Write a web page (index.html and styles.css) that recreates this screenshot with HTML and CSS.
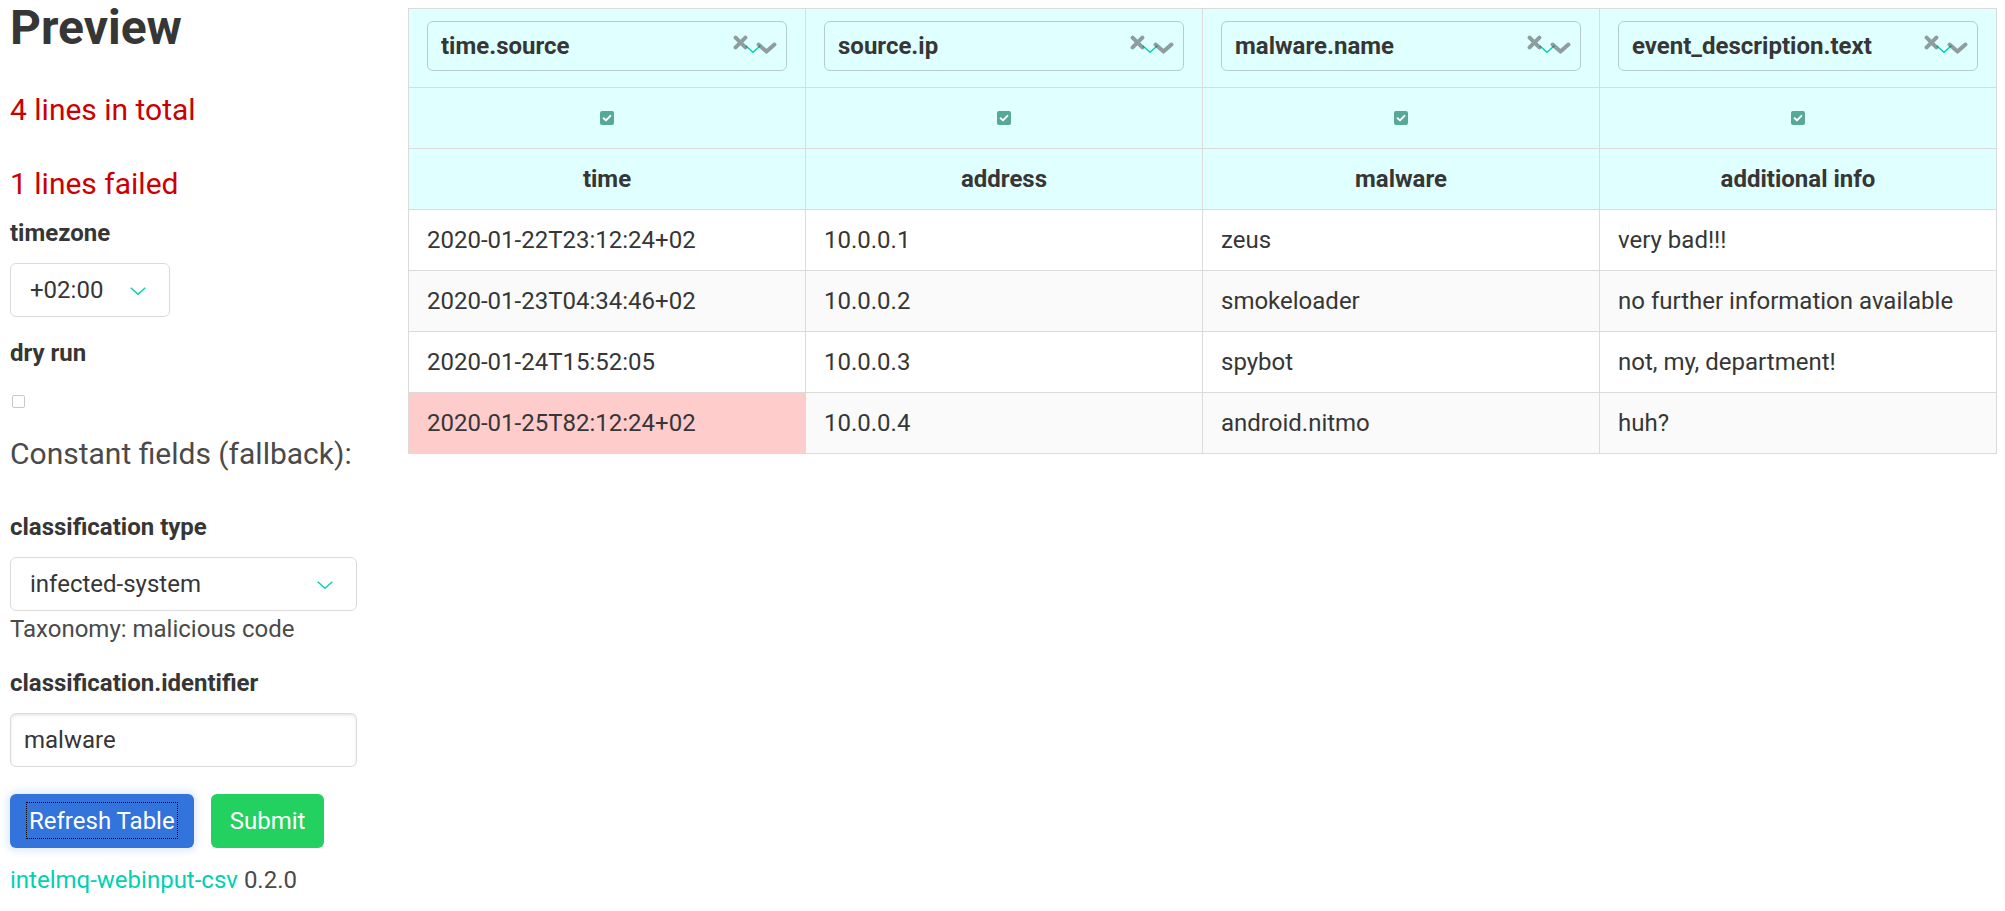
FILE: index.html
```html
<!DOCTYPE html>
<html lang="en">
<head>
<meta charset="utf-8">
<title>Preview</title>
<link rel="stylesheet" href="styles.css">
</head>
<body>
<div class="page">
  <aside class="sidebar">
    <h1 class="title">Preview</h1>
    <p class="subtitle danger">4 lines in total</p>
    <p class="subtitle danger failed">1 lines failed</p>

    <div class="field">
      <label class="label">timezone</label>
      <div class="select select-tz">
        <select><option>+02:00</option></select>
        <svg class="arrow" width="16" height="8" viewBox="0 0 16 8"><path d="M0.7 0.7 L8 7.3 L15.3 0.7" fill="none" stroke="#00d1b2" stroke-width="1.4"/></svg>
      </div>
    </div>

    <div class="field">
      <label class="label">dry run</label>
      <div class="check-wrap"><span class="checkbox"></span></div>
    </div>

    <p class="subtitle muted">Constant fields (fallback):</p>

    <div class="field">
      <label class="label">classification type</label>
      <div class="select select-full">
        <select><option>infected-system</option></select>
        <svg class="arrow" width="16" height="8" viewBox="0 0 16 8"><path d="M0.7 0.7 L8 7.3 L15.3 0.7" fill="none" stroke="#00d1b2" stroke-width="1.4"/></svg>
      </div>
      <p class="help">Taxonomy: malicious code</p>
    </div>

    <div class="field">
      <label class="label">classification.identifier</label>
      <input class="input" type="text" value="malware">
    </div>

    <div class="buttons">
      <button class="button is-link is-focused"><span class="focus-ring">Refresh Table</span></button>
      <button class="button is-success">Submit</button>
    </div>

    <p class="footer"><a class="link" href="#">intelmq-webinput-csv</a> 0.2.0</p>
  </aside>

  <main class="main">
    <table class="preview">
      <thead>
        <tr class="row-select">
          <th>
            <div class="vs"><div class="vs-toggle">
              <span class="vs-value">time.source</span>
              <svg class="vs-teal" width="16" height="8" viewBox="0 0 16 8"><path d="M0.7 0.7 L8 7.3 L15.3 0.7" fill="none" stroke="#00d1b2" stroke-width="1.4"/></svg>
              <span class="vs-actions">
                <svg class="vs-clear" width="15" height="15" viewBox="0 0 15 15"><path d="M2.6 2.6 L12.4 12.4 M12.4 2.6 L2.6 12.4" stroke="rgba(60,60,60,0.5)" stroke-width="4" stroke-linecap="round"/></svg>
                <svg class="vs-open" width="21" height="12" viewBox="0 0 21 12"><path d="M2.6 2.6 L10.5 9.6 L18.4 2.6" fill="none" stroke="rgba(60,60,60,0.5)" stroke-width="4" stroke-linecap="round" stroke-linejoin="round"/></svg>
              </span>
            </div></div>
          </th>
          <th>
            <div class="vs"><div class="vs-toggle">
              <span class="vs-value">source.ip</span>
              <svg class="vs-teal" width="16" height="8" viewBox="0 0 16 8"><path d="M0.7 0.7 L8 7.3 L15.3 0.7" fill="none" stroke="#00d1b2" stroke-width="1.4"/></svg>
              <span class="vs-actions">
                <svg class="vs-clear" width="15" height="15" viewBox="0 0 15 15"><path d="M2.6 2.6 L12.4 12.4 M12.4 2.6 L2.6 12.4" stroke="rgba(60,60,60,0.5)" stroke-width="4" stroke-linecap="round"/></svg>
                <svg class="vs-open" width="21" height="12" viewBox="0 0 21 12"><path d="M2.6 2.6 L10.5 9.6 L18.4 2.6" fill="none" stroke="rgba(60,60,60,0.5)" stroke-width="4" stroke-linecap="round" stroke-linejoin="round"/></svg>
              </span>
            </div></div>
          </th>
          <th>
            <div class="vs"><div class="vs-toggle">
              <span class="vs-value">malware.name</span>
              <svg class="vs-teal" width="16" height="8" viewBox="0 0 16 8"><path d="M0.7 0.7 L8 7.3 L15.3 0.7" fill="none" stroke="#00d1b2" stroke-width="1.4"/></svg>
              <span class="vs-actions">
                <svg class="vs-clear" width="15" height="15" viewBox="0 0 15 15"><path d="M2.6 2.6 L12.4 12.4 M12.4 2.6 L2.6 12.4" stroke="rgba(60,60,60,0.5)" stroke-width="4" stroke-linecap="round"/></svg>
                <svg class="vs-open" width="21" height="12" viewBox="0 0 21 12"><path d="M2.6 2.6 L10.5 9.6 L18.4 2.6" fill="none" stroke="rgba(60,60,60,0.5)" stroke-width="4" stroke-linecap="round" stroke-linejoin="round"/></svg>
              </span>
            </div></div>
          </th>
          <th>
            <div class="vs"><div class="vs-toggle">
              <span class="vs-value">event_description.text</span>
              <svg class="vs-teal" width="16" height="8" viewBox="0 0 16 8"><path d="M0.7 0.7 L8 7.3 L15.3 0.7" fill="none" stroke="#00d1b2" stroke-width="1.4"/></svg>
              <span class="vs-actions">
                <svg class="vs-clear" width="15" height="15" viewBox="0 0 15 15"><path d="M2.6 2.6 L12.4 12.4 M12.4 2.6 L2.6 12.4" stroke="rgba(60,60,60,0.5)" stroke-width="4" stroke-linecap="round"/></svg>
                <svg class="vs-open" width="21" height="12" viewBox="0 0 21 12"><path d="M2.6 2.6 L10.5 9.6 L18.4 2.6" fill="none" stroke="rgba(60,60,60,0.5)" stroke-width="4" stroke-linecap="round" stroke-linejoin="round"/></svg>
              </span>
            </div></div>
          </th>
        </tr>
        <tr class="row-check">
          <th><div class="cb-cell"><span class="cb-on"><svg width="14" height="14" viewBox="0 0 14 14"><path d="M3.6 7.2 L6 9.4 L10.4 4.8" fill="none" stroke="#fff" stroke-width="1.9" stroke-linecap="round" stroke-linejoin="round"/></svg></span></div></th>
          <th><div class="cb-cell"><span class="cb-on"><svg width="14" height="14" viewBox="0 0 14 14"><path d="M3.6 7.2 L6 9.4 L10.4 4.8" fill="none" stroke="#fff" stroke-width="1.9" stroke-linecap="round" stroke-linejoin="round"/></svg></span></div></th>
          <th><div class="cb-cell"><span class="cb-on"><svg width="14" height="14" viewBox="0 0 14 14"><path d="M3.6 7.2 L6 9.4 L10.4 4.8" fill="none" stroke="#fff" stroke-width="1.9" stroke-linecap="round" stroke-linejoin="round"/></svg></span></div></th>
          <th><div class="cb-cell"><span class="cb-on"><svg width="14" height="14" viewBox="0 0 14 14"><path d="M3.6 7.2 L6 9.4 L10.4 4.8" fill="none" stroke="#fff" stroke-width="1.9" stroke-linecap="round" stroke-linejoin="round"/></svg></span></div></th>
        </tr>
        <tr class="row-names">
          <th>time</th>
          <th>address</th>
          <th>malware</th>
          <th>additional info</th>
        </tr>
      </thead>
      <tbody>
        <tr>
          <td>2020-01-22T23:12:24+02</td>
          <td>10.0.0.1</td>
          <td>zeus</td>
          <td>very bad!!!</td>
        </tr>
        <tr>
          <td>2020-01-23T04:34:46+02</td>
          <td>10.0.0.2</td>
          <td>smokeloader</td>
          <td>no further information available</td>
        </tr>
        <tr>
          <td>2020-01-24T15:52:05</td>
          <td>10.0.0.3</td>
          <td>spybot</td>
          <td>not, my, department!</td>
        </tr>
        <tr>
          <td class="is-error">2020-01-25T82:12:24+02</td>
          <td>10.0.0.4</td>
          <td>android.nitmo</td>
          <td>huh?</td>
        </tr>
      </tbody>
    </table>
  </main>
</div>
</body>
</html>
```

FILE: styles.css
```css
* { box-sizing: border-box; }

html, body {
  margin: 0;
  padding: 0;
  background: #fff;
}

body {
  font-family: Roboto, "Liberation Sans", sans-serif;
  font-size: 24px;
  line-height: 36px;
  color: #4a4a4a;
}

.page {
  display: flex;
  align-items: flex-start;
  gap: 51px;
  padding: 1px 0 0 10px;
}

/* ---------- sidebar ---------- */
.sidebar {
  width: 347px;
  flex: none;
}

.title {
  margin: 0 0 36px;
  font-size: 48px;
  line-height: 54px;
  font-weight: 700;
  color: #363636;
}

.subtitle {
  margin: 0 0 36px;
  font-size: 30px;
  line-height: 37.5px;
  font-weight: 400;
}

.subtitle.danger { color: #cc0000; }
.subtitle.failed { margin-bottom: 13px; }
.subtitle.muted { color: #4a4a4a; }

.field { margin-bottom: 18px; }

.label {
  display: block;
  margin-bottom: 12px;
  font-weight: 700;
  color: #363636;
}

.select {
  position: relative;
  height: 54px;
}

.select select {
  appearance: none;
  -webkit-appearance: none;
  width: 100%;
  height: 54px;
  margin: 0;
  padding: 0 60px 0 19px;
  border: 1px solid #dbdbdb;
  border-radius: 6px;
  background: #fff;
  font: inherit;
  color: #363636;
  outline: none;
}

.select-tz { width: 160px; }
.select-full { width: 100%; }

.select .arrow {
  position: absolute;
  right: 24px;
  top: 24px;
  pointer-events: none;
}

.check-wrap {
  height: 34px;
  padding-top: 12px;
}

.checkbox {
  display: block;
  width: 13px;
  height: 13px;
  margin-left: 2px;
  border: 1px solid #c8c8c8;
  border-radius: 2px;
  background: #fff;
}

.help {
  margin: 0;
  color: #4a4a4a;
}

.input {
  display: block;
  width: 100%;
  height: 54px;
  margin: 0;
  padding: 0 13px;
  border: 1px solid #dbdbdb;
  border-radius: 6px;
  box-shadow: inset 0 1.5px 3px rgba(10, 10, 10, 0.1);
  font: inherit;
  color: #363636;
  background: #fff;
  outline: none;
}

.buttons {
  display: flex;
  gap: 17px;
  margin-top: 27px;
  margin-bottom: 14px;
}

.button {
  height: 54px;
  padding: 8px 18px;
  border: 1px solid transparent;
  border-radius: 6px;
  font: inherit;
  line-height: 36px;
  color: #fff;
  cursor: pointer;
}

.button.is-link { background: #3273dc; }
.button.is-success { background: #23d160; }

.button.is-focused {
  box-shadow: 0 0 6px 4px rgba(50, 115, 220, 0.12);
}

.focus-ring {
  display: inline-block;
  height: 35px;
  padding: 0 2px;
  margin: 0 -2px;
  outline: 1px dotted #000;
  vertical-align: top;
}

.footer {
  margin: 0;
  color: #4a4a4a;
}

.link {
  color: #00d1b2;
  text-decoration: none;
}

/* ---------- table ---------- */
.main {
  flex: none;
  padding-top: 7px;
}

.preview {
  width: 1589px;
  table-layout: fixed;
  border-collapse: collapse;
  border-spacing: 0;
  color: #363636;
}

.preview th,
.preview td {
  border: 1px solid #dbdbdb;
  padding: 12px 18px;
  line-height: 36px;
  vertical-align: top;
  text-align: left;
}

.preview thead th {
  background: #e0ffff;
  font-weight: 700;
  text-align: center;
}

.preview tbody td { font-weight: 400; }
.preview tbody tr:nth-child(even) td { background: #fafafa; }
.preview tbody tr td.is-error,
.preview tbody tr:nth-child(even) td.is-error { background: #ffcccc; }

/* vue-select-like header dropdown */
.vs { padding-bottom: 4px; }

.vs-toggle {
  position: relative;
  display: flex;
  align-items: center;
  height: 50px;
  padding: 0 9px 0 13px;
  border: 1px solid rgba(60, 60, 60, 0.26);
  border-radius: 6px;
  text-align: left;
}

.vs-value {
  flex: 1;
  min-width: 0;
  white-space: nowrap;
  overflow: hidden;
  font-weight: 700;
  color: #363636;
}

.vs-teal {
  position: absolute;
  right: 25px;
  top: 23px;
}

.vs-actions {
  position: relative;
  align-self: stretch;
  display: flex;
  align-items: flex-start;
  gap: 8px;
}

.vs-clear { margin-top: 13px; }
.vs-open { margin-top: 20px; }

.cb-cell {
  height: 36px;
  padding-top: 11px;
}

.cb-on {
  display: block;
  width: 14px;
  height: 14px;
  margin: 0 auto;
  border-radius: 2px;
  background: #56a996;
}

.cb-on svg { display: block; }
```
